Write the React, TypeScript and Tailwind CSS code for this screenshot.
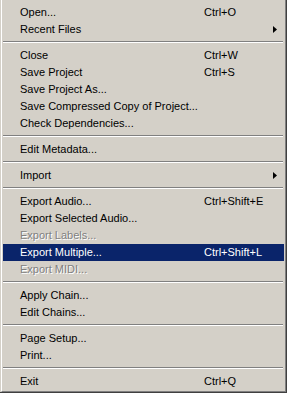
type Item =
  | { kind: "sep" }
  | { kind: "item"; label: string; shortcut?: string; submenu?: boolean; disabled?: boolean; active?: boolean };

const items: Item[] = [
  { kind: "item", label: "Open...", shortcut: "Ctrl+O" },
  { kind: "item", label: "Recent Files", submenu: true },
  { kind: "sep" },
  { kind: "item", label: "Close", shortcut: "Ctrl+W" },
  { kind: "item", label: "Save Project", shortcut: "Ctrl+S" },
  { kind: "item", label: "Save Project As..." },
  { kind: "item", label: "Save Compressed Copy of Project..." },
  { kind: "item", label: "Check Dependencies..." },
  { kind: "sep" },
  { kind: "item", label: "Edit Metadata..." },
  { kind: "sep" },
  { kind: "item", label: "Import", submenu: true },
  { kind: "sep" },
  { kind: "item", label: "Export Audio...", shortcut: "Ctrl+Shift+E" },
  { kind: "item", label: "Export Selected Audio..." },
  { kind: "item", label: "Export Labels...", disabled: true },
  { kind: "item", label: "Export Multiple...", shortcut: "Ctrl+Shift+L", active: true },
  { kind: "item", label: "Export MIDI...", disabled: true },
  { kind: "sep" },
  { kind: "item", label: "Apply Chain..." },
  { kind: "item", label: "Edit Chains..." },
  { kind: "sep" },
  { kind: "item", label: "Page Setup..." },
  { kind: "item", label: "Print..." },
  { kind: "sep" },
  { kind: "item", label: "Exit", shortcut: "Ctrl+Q" },
];

function Arrow() {
  return (
    <svg width="4" height="7" viewBox="0 0 4 7" className="shrink-0">
      <path d="M0 0 L4 3.5 L0 7 Z" fill="#000" />
    </svg>
  );
}

export default function App() {
  return (
    <div
      className="w-[287px] h-[393px] bg-[#d4d0c8] pl-[1px] border-r border-b border-[#404040] flex text-[11px] text-black"
      style={{ fontFamily: '"Liberation Sans", Arial, sans-serif' }}
    >
      <div className="flex-1 flex flex-col pt-[4px] px-[1px] pb-[1px] border-l border-l-white border-r border-b border-[#808080]">
        {items.map((it, idx) => {
          if (it.kind === "sep") {
            return (
              <div key={idx} className="h-[9px] pt-[3px] pr-[1px]">
                <div className="h-[1px] bg-[#808080]" />
                <div className="h-[1px] bg-white" />
              </div>
            );
          }
          const text = it.active
            ? "text-white"
            : it.disabled
            ? "text-[#808080] [text-shadow:1px_1px_0_#fff]"
            : "text-black";
          return (
            <div
              key={idx}
              className={`h-[17px] leading-[17px] flex items-center pl-[17px] pr-[7px] whitespace-nowrap ${
                it.active ? "bg-[#0a246a]" : ""
              } ${text}`}
            >
              <span className="w-[184px]">{it.label}</span>
              {it.shortcut && <span>{it.shortcut}</span>}
              {it.submenu && (
                <span className="ml-auto flex items-center">
                  <Arrow />
                </span>
              )}
            </div>
          );
        })}
      </div>
    </div>
  );
}
